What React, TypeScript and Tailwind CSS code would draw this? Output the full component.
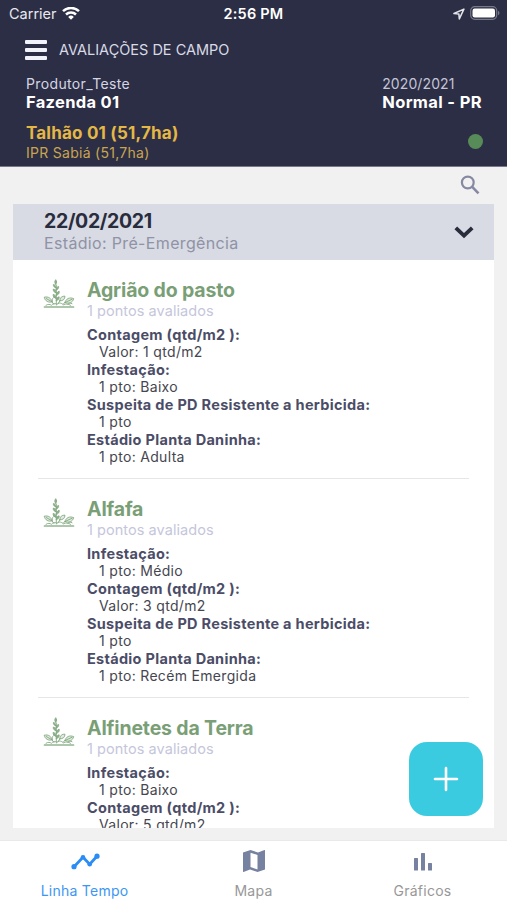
import React from "react";

type Detail = { label: string; value: string };
type Weed = { name: string; details: Detail[] };

const weeds: Weed[] = [
  {
    name: "Agrião do pasto",
    details: [
      { label: "Contagem (qtd/m2 ):", value: "Valor: 1 qtd/m2" },
      { label: "Infestação:", value: "1 pto: Baixo" },
      { label: "Suspeita de PD Resistente a herbicida:", value: "1 pto" },
      { label: "Estádio Planta Daninha:", value: "1 pto: Adulta" },
    ],
  },
  {
    name: "Alfafa",
    details: [
      { label: "Infestação:", value: "1 pto: Médio" },
      { label: "Contagem (qtd/m2 ):", value: "Valor: 3 qtd/m2" },
      { label: "Suspeita de PD Resistente a herbicida:", value: "1 pto" },
      { label: "Estádio Planta Daninha:", value: "1 pto: Recém Emergida" },
    ],
  },
  {
    name: "Alfinetes da Terra",
    details: [
      { label: "Infestação:", value: "1 pto: Baixo" },
      { label: "Contagem (qtd/m2 ):", value: "Valor: 5 qtd/m2" },
    ],
  },
];

function PlantIcon() {
  return (
    <svg className="mt-px h-[31px] w-8 shrink-0" viewBox="0 0 32 31" fill="none" stroke="#83a981" strokeWidth=".9" strokeLinecap="round" strokeLinejoin="round">
      <path d="M1.500 28H30.500" strokeWidth="1.700" stroke="#93b591" />
      <path d="M3 26.300c2-1.500 4-1 5.500 0 1.500-2.200 4-2.200 5.500-1 2-2.300 5-1 6.500.6 2-1.600 5-1 7 .4" />
      <path d="M13.300 26V6" />
      <path d="M12.700 5.200c-1.400-1.400-1-3 0-4.500 1 1.500 1.400 3.100 0 4.500z" fill="#8fb28d" />
      <path d="M12.900 8.700c-2-.3-2.700-1.500-2.500-3.200 1.700.4 2.500 1.500 2.500 3.200zM13 11c2.100-.4 2.800-1.800 2.600-3.500-1.700.5-2.600 1.700-2.600 3.500zM13 13.700c-2.200-.4-2.900-1.800-2.700-3.600 1.900.5 2.700 1.800 2.700 3.600zM13.200 16.300c2.400-.5 3.300-1.900 3-4-2.200.6-3 2-3 4zM13.200 19.400c-2.400-.5-3.200-2-3-4 2.100.6 3 2 3 4zM13.300 21.500c2.300-.4 3.100-1.800 2.800-3.700-1.900.5-2.800 1.800-2.800 3.700z" fill="#8fb28d" />
      <path d="M9 22.800c-3.500 1.200-6.800-.6-7.800-4.600 4.200-.9 7 .9 7.800 4.600zM16.800 21.800c.2-3.300 2-4.800 5.200-4.600-.2 3.200-2 4.800-5.200 4.600zM22 23.500c1-4 4.500-5.500 8.700-3.900-1.200 4.200-4.700 5.600-8.700 3.900z" fill="#dfeade" />
      <path d="M3.200 19.500L9 22.800l2 2.700M9.300 22c-.4-2 .4-3.300 2.300-4M15 25l1.800-3.200M29 20.300l-7 3.200-2 1.800M25 25.200c.8-1.300 2.200-1.500 4-.5" />
    </svg>
  );
}

function StatusBar() {
  return (
    <div className="grid h-7 grid-cols-3 items-center pl-[9px] pr-[7px] text-[15px] leading-7 text-white">
      <div className="flex items-center gap-[5px] text-[#e8e8ee]">
        <span className="text-[14.5px]">Carrier</span>
        <svg className="h-[14px] w-[18px]" viewBox="0 0 18 14" fill="none" stroke="#fff" strokeWidth="2.500">
          <path d="M1 4.200a11.500 11.500 0 0 1 16 0" />
          <path d="M4 7.500a7.200 7.200 0 0 1 10 0" />
          <path d="M9 12.800l-2.800-2.900a4 4 0 0 1 5.600 0z" fill="#fff" stroke="none" />
        </svg>
      </div>
      <span className="pr-0.5 text-center text-[14.5px] font-semibold tracking-[0.200px]">2:56 PM</span>
      <div className="flex items-center justify-end gap-[5px]">
        <svg className="h-3 w-3" viewBox="0 0 11 11" fill="none" stroke="#e3e3ea" strokeWidth="1.400" strokeLinejoin="round">
          <path d="M10 1L.9 5.100l4.500.5.400 4.400z" />
        </svg>
        <svg className="mt-[-2px] h-[14px] w-[30px]" viewBox="0 0 30 14">
          <rect x=".7" y=".7" width="26" height="12.600" rx="4" fill="none" stroke="#777889" strokeWidth="1.200" />
          <rect x="2.500" y="2.500" width="22.500" height="9" rx="2.200" fill="#fff" />
          <path d="M28 4.700c2 1 2 3.600 0 4.600z" fill="#777889" />
        </svg>
      </div>
    </div>
  );
}

function Header() {
  return (
    <header className="h-[167px] shrink-0 border-b border-[#77778a] bg-[#2c2e45]">
      <StatusBar />
      <div className="mt-2 flex h-7 items-center gap-3 pl-[25px]">
        <div className="flex w-[22px] flex-col gap-[4.500px]">
          <span className="h-[3.500px] rounded-[1px] bg-[#f1f2fa]" />
          <span className="h-[3.500px] rounded-[1px] bg-[#f1f2fa]" />
          <span className="h-[3.500px] rounded-[1px] bg-[#f1f2fa]" />
        </div>
        <h1 className="text-[14.500px] leading-5 text-[#d9dae6]">AVALIAÇÕES DE CAMPO</h1>
      </div>
      <div className="mt-[11px] flex justify-between pl-[26px] pr-[25px]">
        <div>
          <p className="text-[14px] leading-[18px] tracking-[0.360px] text-[#d5d6e3]">Produtor_Teste</p>
          <p className="text-[16.500px] font-bold leading-[19px] tracking-[0.300px] text-white">Fazenda 01</p>
        </div>
        <div>
          <p className="text-[14px] leading-[18px] tracking-[0.100px] text-[#c3c5d8]">2020/2021</p>
          <p className="text-[16.500px] font-bold leading-[19px] tracking-[0.370px] text-white">Normal - PR</p>
        </div>
      </div>
      <div className="mt-[11px] flex items-center justify-between pl-[26px] pr-6">
        <div>
          <p className="text-[17px] font-bold leading-5 tracking-[0.200px] text-[#e5b745]">Talhão 01 (51,7ha)</p>
          <p className="text-[14px] leading-5 tracking-[0.280px] text-[#c9a550]">IPR Sabiá (51,7ha)</p>
        </div>
        <span className="mt-[-3px] h-[15px] w-[15px] rounded-full bg-[#578c58]" />
      </div>
    </header>
  );
}

function WeedItem({ weed }: { weed: Weed }) {
  return (
    <article className="mx-[25px] h-[219px] shrink-0 border-b border-[#e6e6e8] pt-[18px]">
      <div className="flex gap-[12px] pl-[5px]">
        <PlantIcon />
        <div className="whitespace-nowrap">
          <h3 className="text-[19.500px] font-bold leading-6 tracking-[-0.160px] text-[#7a9f77]">{weed.name}</h3>
          <p className="text-[14.500px] leading-[18px] tracking-[0.050px] text-[#c5c6db]">1 pontos avaliados</p>
          <dl className="mt-[6px] text-[14.500px] leading-[17.500px]">
            {weed.details.map((d) => (
              <React.Fragment key={d.label}>
                <dt className="font-bold tracking-[0.300px] text-[#4b4d67]">{d.label}</dt>
                <dd className="-mt-px pb-px pl-3 text-[14px] tracking-[0.320px] text-[#45464f]">{d.value}</dd>
              </React.Fragment>
            ))}
          </dl>
        </div>
      </div>
    </article>
  );
}

function TabBar() {
  return (
    <nav className="grid h-[60px] shrink-0 grid-cols-3 border-t border-[#e9e9ea] bg-white text-[14px] leading-5 tracking-[0.250px] text-[#989898]">
      <div className="flex flex-col items-center text-[#3d96f5]">
        <svg className="mt-[5px] h-8 w-[30px]" viewBox="0 0 30 32" fill="none" stroke="#2b8cf5" strokeWidth="2.800">
          <path d="M4 20.700l9-9.400 6.700 7L27 10.200" />
          <g fill="#2b8cf5" stroke="none">
            <circle cx="4" cy="20.700" r="2.600" />
            <circle cx="13" cy="11.300" r="2.300" />
            <circle cx="19.700" cy="18.300" r="2.300" />
            <circle cx="27" cy="10.200" r="2.600" />
          </g>
        </svg>
        <span className="mt-[3px]">Linha Tempo</span>
      </div>
      <div className="flex flex-col items-center">
        <svg className="mt-[5px] h-8 w-6" viewBox="0 0 24 32">
          <path fill="#7781a0" fillRule="evenodd" d="M1 6.500L8.500 4l7.500 2.500L22.500 4c.3-.1.500 0 .5.400v19.100L15.500 26 8 23.500l-6.500 2.400c-.3.100-.5 0-.5-.4zM8.500 6.700v14.400l7 2.300V9z" />
        </svg>
        <span className="mt-[3px]">Mapa</span>
      </div>
      <div className="flex flex-col items-center">
        <svg className="mt-[5px] h-8 w-[22px]" viewBox="0 0 22 32" fill="#7781a0">
          <rect x="2" y="12" width="4" height="12.500" rx=".5" />
          <rect x="9" y="7" width="4" height="17.500" rx=".5" />
          <rect x="16" y="17" width="4" height="7.500" rx=".5" />
        </svg>
        <span className="mt-[3px]">Gráficos</span>
      </div>
    </nav>
  );
}

export default function App() {
  return (
    <div className="relative flex h-[900px] w-[507px] flex-col overflow-hidden bg-[#f1f1f1] font-['Inter',sans-serif]">
      <Header />
      <div className="flex h-[37px] shrink-0 items-center justify-end pr-[27px]">
        <svg className="mt-[-2px] h-5 w-5" viewBox="0 0 20 20" fill="none" stroke="#8789a2" strokeWidth="2.200">
          <circle cx="7.800" cy="7.500" r="5.900" />
          <path d="M12 11.700l6.500 6.600" strokeWidth="2.600" />
        </svg>
      </div>
      <main className="mx-[13px] flex min-h-0 flex-1 flex-col overflow-hidden bg-white">
        <div className="flex h-14 shrink-0 items-center justify-between bg-[#d8dae4] pl-[31px] pr-[19px]">
          <div>
            <h2 className="text-[19.500px] font-bold leading-[22px] tracking-[-0.340px] text-[#292c3c]">22/02/2021</h2>
            <p className="text-[16px] leading-[22px] tracking-[0.340px] text-[#8f93a5]">Estádio: Pré-Emergência</p>
          </div>
          <svg className="h-5 w-[22px]" viewBox="0 0 22 20" fill="none" stroke="#292c3c" strokeWidth="3.800">
            <path d="M2.800 5.800l8.200 7.900L19.200 5.800" />
          </svg>
        </div>
        {weeds.map((w) => (
          <WeedItem key={w.name} weed={w} />
        ))}
      </main>
      <div className="h-3 shrink-0" />
      <TabBar />
      <button aria-label="Adicionar" className="absolute left-[409px] top-[742px] flex h-[73.500px] w-[73.500px] items-center justify-center rounded-[18px] bg-[#3bcbe0]">
        <svg className="h-[26px] w-[26px]" viewBox="0 0 26 26" stroke="#fff" strokeWidth="2.600" strokeLinecap="round">
          <path d="M13 2v22M2 13h22" />
        </svg>
      </button>
    </div>
  );
}
